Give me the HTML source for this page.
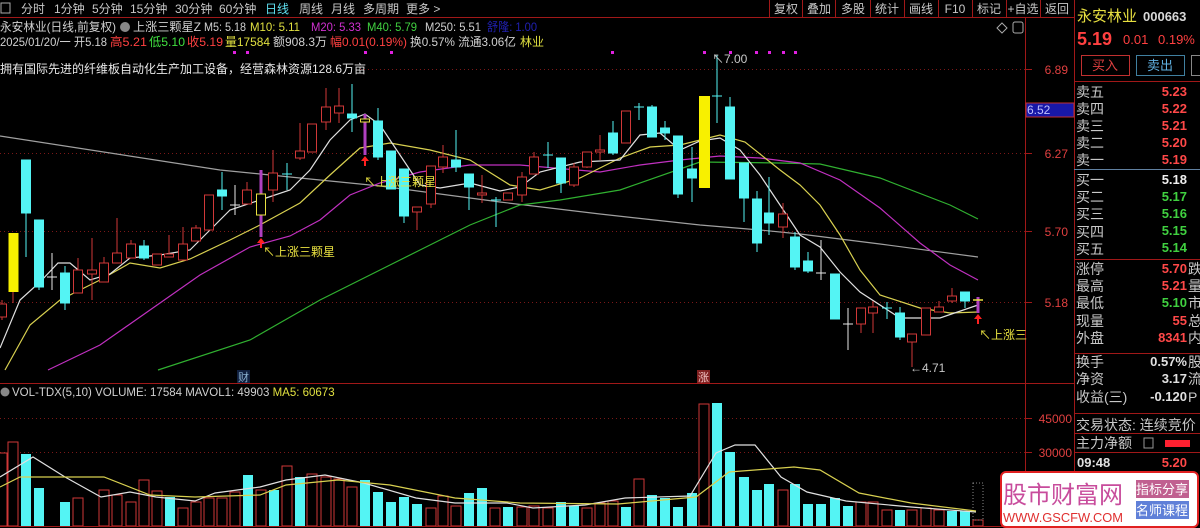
<!DOCTYPE html>
<html><head><meta charset="utf-8"><style>
html,body{margin:0;padding:0;background:#000;width:1200px;height:528px;overflow:hidden}
svg{display:block}
text{font-family:"Liberation Sans","Noto Sans CJK SC",sans-serif}
</style></head><body>
<svg width="1200" height="528" viewBox="0 0 1200 528" font-size="12" xmlns="http://www.w3.org/2000/svg">
<rect width="1200" height="528" fill="#000"/>
<rect x="1" y="3" width="9" height="10" fill="none" stroke="#aaa"/>
<line x1="0" y1="17.5" x2="1074" y2="17.5" stroke="#a01818"/>
<g fill="#c8c8c8" font-size="12">
<text x="21" y="13">分时</text><text x="54" y="13">1分钟</text><text x="92" y="13">5分钟</text><text x="130" y="13">15分钟</text><text x="175" y="13">30分钟</text><text x="219" y="13">60分钟</text><text x="265" y="13" fill="#5fe0f0">日线</text><text x="299" y="13">周线</text><text x="331" y="13">月线</text><text x="363" y="13">多周期</text><text x="406" y="13">更多 &gt;</text>
</g>
<g stroke="#a01818"><line x1="769.5" y1="0" x2="769.5" y2="17"/><line x1="802.5" y1="0" x2="802.5" y2="17"/><line x1="835.5" y1="0" x2="835.5" y2="17"/><line x1="870.5" y1="0" x2="870.5" y2="17"/><line x1="904.5" y1="0" x2="904.5" y2="17"/><line x1="938.5" y1="0" x2="938.5" y2="17"/><line x1="972.5" y1="0" x2="972.5" y2="17"/><line x1="1006.5" y1="0" x2="1006.5" y2="17"/><line x1="1040.5" y1="0" x2="1040.5" y2="17"/></g>
<g fill="#c8c8c8" text-anchor="middle"><text x="786" y="13">复权</text><text x="819" y="13">叠加</text><text x="853" y="13">多股</text><text x="887" y="13">统计</text><text x="921" y="13">画线</text><text x="955" y="13">F10</text><text x="989" y="13">标记</text><text x="1023" y="13">+自选</text><text x="1057" y="13">返回</text></g>
<text x="0" y="31" fill="#d0d0d0" textLength="116" lengthAdjust="spacingAndGlyphs">永安林业(日线,前复权)</text>
<circle cx="125" cy="27" r="5" fill="#888"/>
<text x="133" y="31" fill="#d0d0d0" textLength="68" lengthAdjust="spacingAndGlyphs">上涨三颗星Z</text>
<text x="204" y="31" fill="#d0d0d0" textLength="42" lengthAdjust="spacingAndGlyphs">M5: 5.18</text>
<text x="250" y="31" fill="#e0e040" textLength="50" lengthAdjust="spacingAndGlyphs">M10: 5.11</text>
<text x="311" y="31" fill="#d030d0" textLength="50" lengthAdjust="spacingAndGlyphs">M20: 5.33</text>
<text x="367" y="31" fill="#40d040" textLength="50" lengthAdjust="spacingAndGlyphs">M40: 5.79</text>
<text x="425" y="31" fill="#d0d0d0" textLength="56" lengthAdjust="spacingAndGlyphs">M250: 5.51</text>
<text x="487" y="31" fill="#2020b0" textLength="50" lengthAdjust="spacingAndGlyphs">舒隆: 1.00</text>
<text x="0" y="46" fill="#d0d0d0" textLength="107" lengthAdjust="spacingAndGlyphs">2025/01/20/一 开5.18</text>
<text x="110" y="46" fill="#ff4040" textLength="37" lengthAdjust="spacingAndGlyphs">高5.21</text>
<text x="149" y="46" fill="#40e040" textLength="36" lengthAdjust="spacingAndGlyphs">低5.10</text>
<text x="187" y="46" fill="#ff4040" textLength="36" lengthAdjust="spacingAndGlyphs">收5.19</text>
<text x="225" y="46" fill="#e0e040" textLength="45" lengthAdjust="spacingAndGlyphs">量17584</text>
<text x="273" y="46" fill="#d0d0d0" textLength="54" lengthAdjust="spacingAndGlyphs">额908.3万</text>
<text x="330" y="46" fill="#ff4040" textLength="77" lengthAdjust="spacingAndGlyphs">幅0.01(0.19%)</text>
<text x="410" y="46" fill="#d0d0d0" textLength="106" lengthAdjust="spacingAndGlyphs">换0.57% 流通3.06亿</text>
<text x="520" y="46" fill="#e0e040">林业</text>
<g fill="#e020e0"><rect x="233" y="51" width="3" height="3"/><rect x="246" y="51" width="3" height="3"/><rect x="364" y="51" width="3" height="3"/><rect x="390" y="51" width="3" height="3"/><rect x="611" y="51" width="3" height="3"/><rect x="703" y="51" width="3" height="3"/><rect x="729" y="51" width="3" height="3"/><rect x="755" y="51" width="3" height="3"/><rect x="768" y="51" width="3" height="3"/><rect x="782" y="51" width="3" height="3"/><rect x="794" y="51" width="3" height="3"/></g>
<text x="0" y="73" fill="#e8e8e8">拥有国际先进的纤维板自动化生产加工设备，经营森林资源128.6万亩</text>
<path d="M1002 23 l5 5 l-5 5 l-5 -5z" fill="none" stroke="#aaa"/>
<rect x="1013" y="22" width="10" height="11" rx="2" fill="none" stroke="#aaa"/>
<g stroke="#7a1818" stroke-dasharray="1,3"><line x1="360" y1="69.5" x2="1025" y2="69.5"/><line x1="0" y1="153.5" x2="1025" y2="153.5"/><line x1="0" y1="231.5" x2="1025" y2="231.5"/><line x1="0" y1="302.5" x2="1025" y2="302.5"/><line x1="0" y1="418.5" x2="1025" y2="418.5"/><line x1="0" y1="452.5" x2="1025" y2="452.5"/></g>
<line x1="1025.5" y1="18" x2="1025.5" y2="528" stroke="#a01818"/>
<line x1="1074.5" y1="0" x2="1074.5" y2="528" stroke="#a01818"/>
<line x1="0" y1="383.5" x2="1074" y2="383.5" stroke="#a01818"/>
<g stroke="#a01818"><line x1="1025" y1="69.5" x2="1032" y2="69.5"/><line x1="1025" y1="153.5" x2="1032" y2="153.5"/><line x1="1025" y1="231.5" x2="1032" y2="231.5"/><line x1="1025" y1="302.5" x2="1032" y2="302.5"/><line x1="1025" y1="418.5" x2="1032" y2="418.5"/><line x1="1025" y1="452.5" x2="1032" y2="452.5"/></g>
<g fill="#e04040" text-anchor="end"><text x="1068" y="74">6.89</text><text x="1068" y="158">6.27</text><text x="1068" y="236">5.70</text><text x="1068" y="307">5.18</text><text x="1072" y="423">45000</text><text x="1072" y="457">30000</text></g>
<rect x="1026" y="103" width="48" height="14" fill="#1818a8" stroke="#c03030"/>
<text x="1027" y="114" fill="#c0c0ff">6.52</text>
<g fill="none" stroke-width="1.2">
<polyline stroke="#a0a0a0" points="0,136 220,170 300,178 380,186 500,202 600,214 700,225 760,230 800,234 880,244 978,257"/>
<polyline stroke="#30b030" points="158,370 250,340 320,300 380,270 420,250 470,225 520,205 560,200 620,190 700,162 780,163 820,164 880,178 950,205 978,219"/>
<polyline stroke="#c030c0" points="48,370 100,345 150,310 200,275 250,247 290,236 320,220 350,195 380,183 420,172 470,165 520,165 600,172 640,165 680,160 720,156 760,158 800,163 840,180 880,208 920,243 950,265 978,280"/>
<polyline stroke="#d8d050" points="5,370 30,325 60,300 100,280 130,263 160,268 190,259 230,240 258,226 300,203 330,175 360,148 390,143 430,150 470,160 510,185 540,190 580,178 620,158 650,147 680,145 720,135 745,142 780,170 800,185 820,205 840,235 860,270 880,295 920,308 950,313 978,312"/>
<polyline stroke="#e0e0e0" points="0,348 20,300 40,282 58,263 70,263 90,280 110,274 130,258 160,255 190,250 210,230 230,210 260,200 290,190 310,170 330,140 350,120 365,114 380,125 400,155 420,185 440,188 470,183 500,191 520,187 540,172 580,162 620,160 640,135 660,133 680,150 700,141 720,138 740,150 760,175 780,205 800,235 820,247 840,272 860,292 900,318 940,318 978,305"/>
</g>
<g stroke="#d03838" fill="#000">
<line x1="2" y1="300" x2="2" y2="320"/><rect x="-2.5" y="304" width="9" height="13"/>
<line x1="78" y1="258" x2="78" y2="293"/><rect x="73.5" y="270" width="9" height="23"/>
<line x1="92" y1="238" x2="92" y2="300"/><rect x="87.5" y="270" width="9" height="4"/>
<line x1="104" y1="257" x2="104" y2="282"/><rect x="99.5" y="263" width="9" height="19"/>
<line x1="117" y1="218" x2="117" y2="263"/><rect x="112.5" y="253" width="9" height="10"/>
<line x1="131" y1="240" x2="131" y2="258"/><rect x="126.5" y="244" width="9" height="14"/>
<rect x="152.5" y="254" width="9" height="11"/>
<line x1="169" y1="235" x2="169" y2="257"/><rect x="164.5" y="254" width="9" height="3"/>
<line x1="183" y1="227" x2="183" y2="260"/><rect x="178.5" y="244" width="9" height="16"/>
<line x1="196" y1="225" x2="196" y2="241"/><rect x="191.5" y="228" width="9" height="13"/>
<rect x="204.5" y="195" width="9" height="35"/>
<line x1="247" y1="182" x2="247" y2="204"/><rect x="242.5" y="190" width="9" height="14"/>
<line x1="273" y1="150" x2="273" y2="202"/><rect x="268.5" y="173" width="9" height="17"/>
<line x1="300" y1="123" x2="300" y2="160"/><rect x="295.5" y="151" width="9" height="7"/>
<rect x="307.5" y="124" width="9" height="28"/>
<line x1="326" y1="88" x2="326" y2="130"/><rect x="321.5" y="107" width="9" height="15"/>
<line x1="339" y1="88" x2="339" y2="123"/><rect x="334.5" y="106" width="9" height="7"/>
<line x1="417" y1="207" x2="417" y2="230"/><rect x="412.5" y="207" width="9" height="5"/>
<line x1="431" y1="166" x2="431" y2="208"/><rect x="426.5" y="166" width="9" height="38"/>
<line x1="443" y1="145" x2="443" y2="173"/><rect x="438.5" y="157" width="9" height="10"/>
<line x1="482" y1="175" x2="482" y2="203"/><rect x="477.5" y="193" width="9" height="2"/>
<rect x="503.5" y="193" width="9" height="7"/>
<line x1="522" y1="172" x2="522" y2="202"/><rect x="517.5" y="177" width="9" height="18"/>
<line x1="534" y1="152" x2="534" y2="174"/><rect x="529.5" y="157" width="9" height="17"/>
<line x1="574" y1="163" x2="574" y2="187"/><rect x="569.5" y="167" width="9" height="18"/>
<line x1="587" y1="152" x2="587" y2="168"/><rect x="582.5" y="152" width="9" height="15"/>
<line x1="600" y1="135" x2="600" y2="160"/><rect x="595.5" y="150" width="9" height="2"/>
<rect x="621.5" y="111" width="9" height="32"/>
<line x1="783" y1="203" x2="783" y2="238"/><rect x="778.5" y="214" width="9" height="13"/>
<line x1="861" y1="308" x2="861" y2="333"/><rect x="856.5" y="308" width="9" height="16"/>
<line x1="873" y1="301" x2="873" y2="333"/><rect x="868.5" y="307" width="9" height="6"/>
<line x1="912" y1="334" x2="912" y2="367"/><rect x="907.5" y="334" width="9" height="8"/>
<rect x="921.5" y="308" width="9" height="27"/>
<line x1="939" y1="301" x2="939" y2="312"/><rect x="934.5" y="307" width="9" height="5"/>
<line x1="952" y1="288" x2="952" y2="303"/><rect x="947.5" y="296" width="9" height="5"/>
</g>
<g stroke="#54f4f4" fill="#54f4f4">
<line x1="26" y1="160" x2="26" y2="257"/><rect x="21.5" y="160" width="9" height="53"/>
<line x1="39" y1="220" x2="39" y2="290"/><rect x="34.5" y="220" width="9" height="67"/>
<line x1="65" y1="266" x2="65" y2="310"/><rect x="60.5" y="273" width="9" height="30"/>
<line x1="144" y1="240" x2="144" y2="260"/><rect x="139.5" y="246" width="9" height="12"/>
<line x1="222" y1="172" x2="222" y2="210"/><rect x="217.5" y="190" width="9" height="6"/>
<line x1="287" y1="163" x2="287" y2="190"/><line x1="282" y1="174" x2="292" y2="174"/>
<line x1="352" y1="84" x2="352" y2="132"/><rect x="347.5" y="114" width="9" height="4"/>
<line x1="378" y1="108" x2="378" y2="160"/><rect x="373.5" y="121" width="9" height="36"/>
<rect x="386.5" y="151" width="9" height="38"/>
<line x1="404" y1="169" x2="404" y2="223"/><rect x="399.5" y="169" width="9" height="47"/>
<line x1="456" y1="130" x2="456" y2="172"/><rect x="451.5" y="160" width="9" height="7"/>
<line x1="469" y1="174" x2="469" y2="210"/><rect x="464.5" y="174" width="9" height="13"/>
<line x1="496" y1="197" x2="496" y2="227"/><line x1="491" y1="200" x2="501" y2="200"/>
<line x1="548" y1="142" x2="548" y2="168"/><line x1="543" y1="155" x2="553" y2="155"/>
<line x1="561" y1="158" x2="561" y2="193"/><rect x="556.5" y="158" width="9" height="25"/>
<line x1="613" y1="121" x2="613" y2="155"/><rect x="608.5" y="133" width="9" height="20"/>
<line x1="639" y1="103" x2="639" y2="120"/><line x1="634" y1="107" x2="644" y2="107"/>
<line x1="652" y1="105" x2="652" y2="137"/><rect x="647.5" y="107" width="9" height="30"/>
<line x1="665" y1="121" x2="665" y2="140"/><rect x="660.5" y="128" width="9" height="5"/>
<line x1="678" y1="136" x2="678" y2="198"/><rect x="673.5" y="136" width="9" height="58"/>
<line x1="692" y1="147" x2="692" y2="202"/><rect x="687.5" y="169" width="9" height="9"/>
<line x1="717" y1="55" x2="717" y2="123"/><line x1="712" y1="96" x2="722" y2="96"/>
<line x1="730" y1="97" x2="730" y2="179"/><rect x="725.5" y="107" width="9" height="72"/>
<line x1="744" y1="163" x2="744" y2="222"/><rect x="739.5" y="163" width="9" height="35"/>
<line x1="757" y1="191" x2="757" y2="252"/><rect x="752.5" y="199" width="9" height="44"/>
<line x1="769" y1="177" x2="769" y2="235"/><rect x="764.5" y="213" width="9" height="10"/>
<line x1="795" y1="232" x2="795" y2="270"/><rect x="790.5" y="237" width="9" height="30"/>
<line x1="808" y1="252" x2="808" y2="273"/><rect x="803.5" y="261" width="9" height="10"/>
<rect x="830.5" y="274" width="9" height="45"/>
<line x1="887" y1="302" x2="887" y2="319"/><line x1="882" y1="308" x2="892" y2="308"/>
<line x1="900" y1="307" x2="900" y2="340"/><rect x="895.5" y="313" width="9" height="24"/>
<line x1="965" y1="292" x2="965" y2="308"/><rect x="960.5" y="292" width="9" height="9"/>
</g>
<g fill="#f8f000"><rect x="8.5" y="233" width="10" height="59"/><rect x="699" y="96" width="11" height="92"/></g>
<line x1="13" y1="292" x2="13" y2="303" stroke="#d03838"/>
<g stroke="#e8e8e8"><line x1="52" y1="253" x2="52" y2="290"/><line x1="47" y1="277" x2="57" y2="277"/><line x1="235" y1="185" x2="235" y2="215"/><line x1="230" y1="205" x2="240" y2="205"/><line x1="821" y1="240" x2="821" y2="280"/><line x1="816" y1="273" x2="826" y2="273"/><line x1="848" y1="308" x2="848" y2="350"/><line x1="843" y1="324" x2="853" y2="324"/></g>
<g stroke="#b040c0" stroke-width="3"><line x1="261" y1="170" x2="261" y2="237"/><line x1="365" y1="114" x2="365" y2="155"/><line x1="978" y1="297" x2="978" y2="313"/></g>
<g fill="#000" stroke="#e8e040"><rect x="256.5" y="194" width="9" height="21"/><rect x="360.5" y="119" width="9" height="3"/></g>
<line x1="973" y1="300" x2="983" y2="300" stroke="#e8e040" stroke-width="1.5"/>
<g fill="#ff2020"><path d="M261 238 l-4 5 h3 v5 h2 v-5 h3z"/><path d="M365 156 l-4 5 h3 v5 h2 v-5 h3z"/><path d="M978 314 l-4 5 h3 v5 h2 v-5 h3z"/></g>
<g fill="#e8e040" font-size="12"><text x="263" y="256">↖上涨三颗星</text><text x="364" y="186">↖上涨三颗星</text><text x="979" y="339">↖上涨三</text></g>
<text x="712" y="63" fill="#c8c8c8">↖7.00</text>
<text x="910" y="372" fill="#c8c8c8">←4.71</text>
<rect x="237" y="370" width="13" height="13" fill="#102040"/><text x="238" y="381" fill="#8ab0d0" font-size="11">财</text>
<rect x="697" y="370" width="13" height="13" fill="#802020"/><text x="698" y="381" fill="#f0c0c0" font-size="11">涨</text>
<circle cx="5" cy="392" r="4.5" fill="#888"/>
<text x="12" y="396" fill="#d0d0d0" font-size="11.5">VOL-TDX(5,10) VOLUME: 17584 MAVOL1: 49903 <tspan fill="#e0e040">MA5: 60673</tspan></text>
<g stroke="#d03838" fill="#000">
<rect x="-3" y="453" width="10" height="73"/><rect x="8" y="442" width="10" height="84"/><rect x="73" y="498" width="10" height="28"/><rect x="99" y="490" width="10" height="36"/><rect x="112" y="495" width="10" height="31"/><rect x="126" y="502" width="10" height="24"/><rect x="139" y="480" width="10" height="46"/><rect x="152" y="491" width="10" height="35"/><rect x="178" y="508" width="10" height="18"/><rect x="191" y="502" width="10" height="24"/><rect x="204" y="498" width="10" height="28"/><rect x="217" y="498" width="10" height="28"/><rect x="230" y="492" width="10" height="34"/><rect x="256" y="490" width="10" height="36"/><rect x="282" y="466" width="10" height="60"/><rect x="307" y="474" width="10" height="52"/><rect x="321" y="477" width="10" height="49"/><rect x="334" y="479" width="10" height="47"/><rect x="347" y="487" width="10" height="39"/><rect x="426" y="508" width="10" height="18"/><rect x="438" y="496" width="10" height="30"/><rect x="451" y="506" width="10" height="20"/><rect x="490" y="508" width="10" height="18"/><rect x="517" y="507" width="10" height="19"/><rect x="529" y="506" width="10" height="20"/><rect x="543" y="508" width="10" height="18"/><rect x="582" y="508" width="10" height="18"/><rect x="595" y="503" width="10" height="23"/><rect x="608" y="501" width="10" height="25"/><rect x="634" y="479" width="10" height="47"/><rect x="699" y="404" width="10" height="122"/><rect x="778" y="490" width="10" height="36"/><rect x="856" y="502" width="10" height="24"/><rect x="868" y="502" width="10" height="24"/><rect x="882" y="510" width="10" height="16"/><rect x="907" y="510" width="10" height="16"/><rect x="921" y="508" width="10" height="18"/><rect x="934" y="510" width="10" height="16"/><rect x="973" y="520" width="10" height="6"/>
</g>
<rect x="973" y="483" width="10" height="37" fill="none" stroke="#888" stroke-dasharray="1,2"/>
<g fill="#54f4f4">
<rect x="21" y="454" width="10" height="72"/><rect x="34" y="488" width="10" height="38"/><rect x="60" y="502" width="10" height="24"/><rect x="165" y="497" width="10" height="29"/><rect x="243" y="475" width="10" height="51"/><rect x="269" y="490" width="10" height="36"/><rect x="295" y="477" width="10" height="49"/><rect x="360" y="480" width="10" height="46"/><rect x="373" y="492" width="10" height="34"/><rect x="386" y="502" width="10" height="24"/><rect x="399" y="497" width="10" height="29"/><rect x="412" y="504" width="10" height="22"/><rect x="464" y="493" width="10" height="33"/><rect x="477" y="488" width="10" height="38"/><rect x="503" y="507" width="10" height="19"/><rect x="556" y="502" width="10" height="24"/><rect x="569" y="506" width="10" height="20"/><rect x="621" y="507" width="10" height="19"/><rect x="647" y="495" width="10" height="31"/><rect x="660" y="498" width="10" height="28"/><rect x="673" y="507" width="10" height="19"/><rect x="687" y="493" width="10" height="33"/><rect x="712" y="403" width="10" height="123"/><rect x="725" y="452" width="10" height="74"/><rect x="739" y="477" width="10" height="49"/><rect x="752" y="490" width="10" height="36"/><rect x="764" y="484" width="10" height="42"/><rect x="790" y="484" width="10" height="42"/><rect x="803" y="504" width="10" height="22"/><rect x="816" y="504" width="10" height="22"/><rect x="830" y="498" width="10" height="28"/><rect x="843" y="506" width="10" height="20"/><rect x="895" y="510" width="10" height="16"/><rect x="947" y="511" width="10" height="15"/><rect x="960" y="511" width="10" height="15"/>
</g>
<g fill="none" stroke-width="1.2">
<polyline stroke="#e0e0e0" points="0,477 33,457 65,477 101,497 130,492 156,497 195,501 215,493 260,487 286,480 325,475 364,483 416,498 455,503 507,503 533,508 585,505 625,498 690,496 716,453 735,445 755,445 781,477 807,492 846,501 911,507 976,512"/>
<polyline stroke="#d8d050" points="0,487 20,477 104,477 150,495 195,497 260,495 286,485 338,480 390,485 455,498 520,503 618,504 696,497 729,472 794,467 820,470 859,493 911,503 976,511"/>
</g>
<line x1="0" y1="526.5" x2="1025" y2="526.5" stroke="#a01818"/>
<!-- right panel -->
<text x="1077" y="21" fill="#e8e040" font-size="15">永安林业</text>
<text x="1143" y="21" fill="#d8d8d8" font-size="13" font-weight="bold">000663</text>
<text x="1077" y="45" fill="#ff4040" font-size="18" font-weight="bold">5.19</text>
<text x="1123" y="44" fill="#ff4040" font-size="13">0.01</text>
<text x="1158" y="44" fill="#ff4040" font-size="13">0.19%</text>
<rect x="1081.5" y="55.5" width="48" height="20" fill="none" stroke="#c03030"/>
<text x="1105" y="70" fill="#e04040" text-anchor="middle" font-size="13">买入</text>
<rect x="1136.5" y="55.5" width="48" height="20" fill="none" stroke="#4080a0"/>
<text x="1160" y="70" fill="#60b0e0" text-anchor="middle" font-size="13">卖出</text>
<rect x="1191.5" y="55.5" width="12" height="20" fill="none" stroke="#888"/>
<line x1="1074" y1="81.5" x2="1200" y2="81.5" stroke="#a01818"/>
<g fill="#c8c8c8" font-size="14">
<text x="1076" y="97">卖五</text><text x="1076" y="114">卖四</text><text x="1076" y="131">卖三</text><text x="1076" y="148">卖二</text><text x="1076" y="165">卖一</text>
<text x="1076" y="185">买一</text><text x="1076" y="202">买二</text><text x="1076" y="219">买三</text><text x="1076" y="237">买四</text><text x="1076" y="254">买五</text>
<text x="1076" y="274">涨停</text><text x="1076" y="291">最高</text><text x="1076" y="308">最低</text><text x="1076" y="326">现量</text><text x="1076" y="343">外盘</text>
<text x="1076" y="367">换手</text><text x="1076" y="384">净资</text><text x="1076" y="402">收益(三)</text>
<text x="1076" y="430">交易状态: 连续竞价</text><text x="1076" y="448">主力净额</text>
<text x="1188" y="274">跌</text><text x="1188" y="291">量</text><text x="1188" y="308">市</text><text x="1188" y="326">总</text><text x="1188" y="343">内</text><text x="1188" y="367">股</text><text x="1188" y="384">流</text><text x="1188" y="402">P</text>
</g>
<g font-size="13" font-weight="bold" text-anchor="end">
<g fill="#ff4848"><text x="1187" y="96">5.23</text><text x="1187" y="113">5.22</text><text x="1187" y="130">5.21</text><text x="1187" y="147">5.20</text><text x="1187" y="164">5.19</text><text x="1187" y="273">5.70</text><text x="1187" y="290">5.21</text><text x="1187" y="325">55</text><text x="1187" y="342">8341</text><text x="1187" y="467">5.20</text></g>
<text x="1187" y="184" fill="#f0f0f0">5.18</text>
<g fill="#40d040"><text x="1187" y="201">5.17</text><text x="1187" y="218">5.16</text><text x="1187" y="235">5.15</text><text x="1187" y="252">5.14</text><text x="1187" y="307">5.10</text></g>
<g fill="#e0e0e0"><text x="1187" y="366">0.57%</text><text x="1187" y="383">3.17</text><text x="1187" y="401">-0.120</text></g>
</g>
<text x="1077" y="467" fill="#e0e0e0" font-size="13" font-weight="bold">09:48</text>
<line x1="1074" y1="169.5" x2="1200" y2="169.5" stroke="#6080a0"/>
<g stroke="#a01818"><line x1="1074" y1="259.5" x2="1200" y2="259.5"/><line x1="1074" y1="353.5" x2="1200" y2="353.5"/><line x1="1074" y1="413.5" x2="1200" y2="413.5"/><line x1="1074" y1="433.5" x2="1200" y2="433.5"/><line x1="1074" y1="452.5" x2="1200" y2="452.5"/></g>
<rect x="1144" y="438" width="9" height="10" fill="none" stroke="#999"/>
<rect x="1165" y="440" width="25" height="7" fill="#ff2030"/>
<rect x="1001" y="472" width="197" height="55" rx="5" fill="#fff" stroke="#e02020" stroke-width="2"/>
<text x="1003" y="503" fill="#c84c9c" font-size="24" textLength="120" lengthAdjust="spacingAndGlyphs">股市财富网</text>
<text x="1003" y="522" fill="#e03030" font-size="13" font-family="Liberation Serif,serif" textLength="120" lengthAdjust="spacingAndGlyphs">WWW.GSCFW.COM</text>
<rect x="1136" y="480" width="53" height="18" fill="#c06090"/><text x="1162" y="494" fill="#fff" text-anchor="middle" font-size="13">指标分享</text>
<rect x="1136" y="501" width="53" height="18" fill="#6080d8"/><text x="1162" y="515" fill="#fff" text-anchor="middle" font-size="13">名师课程</text>
</svg>
</body></html>
